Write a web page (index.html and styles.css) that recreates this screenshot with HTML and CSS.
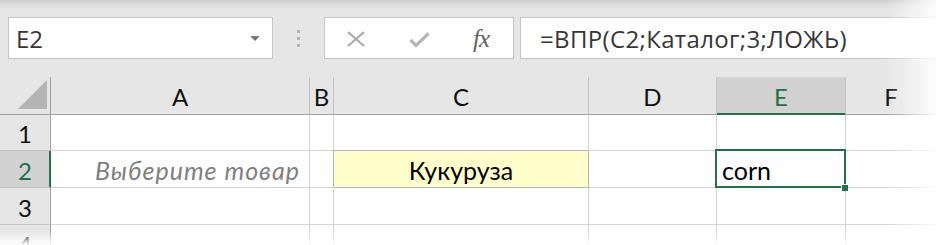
FILE: index.html
```html
<!DOCTYPE html>
<html lang="ru">
<head>
<meta charset="utf-8">
<title>Excel ВПР</title>
<link rel="stylesheet" href="styles.css">
</head>
<body>
<div class="app">
  <div class="toolbar">
    <div class="namebox">
      <span class="nb-text">E2</span>
      <svg class="nb-arrow" width="8" height="5" viewBox="0 0 8 5"><path d="M0 0H8V1L4 5L0 1Z" fill="#777"/></svg>
    </div>
    <div class="grip"><i></i><i></i><i></i></div>
    <div class="fxbox">
      <svg class="ic-x" width="18" height="16" viewBox="0 0 18 16"><path d="M1 1L17 15M17 1L1 15" stroke="#a8a8a8" stroke-width="2" fill="none"/></svg>
      <svg class="ic-ok" width="21" height="16" viewBox="0 0 21 16"><path d="M1.5 8L7 13.5L19.5 1.5" stroke="#b5b5b5" stroke-width="3.2" fill="none"/></svg>
      <span class="ic-fx">fx</span>
    </div>
    <div class="formula">=ВПР(C2;Каталог;3;ЛОЖЬ)</div>
  </div>

  <div class="sheet">
    <div class="corner"><svg width="30" height="30" viewBox="0 0 30 30"><path d="M29 0V29H0Z" fill="#b4b4b4"/></svg></div>
    <div class="ch">A</div>
    <div class="ch">B</div>
    <div class="ch">C</div>
    <div class="ch">D</div>
    <div class="ch sel">E</div>
    <div class="ch last">F</div>

    <div class="rh">1</div>
    <div class="c"></div><div class="c"></div><div class="c"></div><div class="c"></div><div class="c"></div><div class="c last"></div>

    <div class="rh sel">2</div>
    <div class="c hint">Выберите товар</div>
    <div class="c"></div>
    <div class="c input">Кукуруза</div>
    <div class="c"></div>
    <div class="c active">corn<span class="handle"></span></div>
    <div class="c last"></div>

    <div class="rh">3</div>
    <div class="c"></div><div class="c"></div><div class="c"></div><div class="c"></div><div class="c"></div><div class="c last"></div>

    <div class="rh">4</div>
    <div class="c"></div><div class="c"></div><div class="c"></div><div class="c"></div><div class="c"></div><div class="c last"></div>
  </div>

  <div class="fade-right"></div>
  <div class="fade-bottom"></div>
</div>
</body>
</html>
```
FILE: styles.css
```css
* { box-sizing: border-box; }
html, body { margin: 0; padding: 0; }
body { width: 936px; height: 245px; overflow: hidden; background: #fff; }

.app {
  position: relative;
  width: 936px;
  height: 245px;
  overflow: hidden;
  background: #e6e6e6;
}

/* ---------- formula bar ---------- */
.toolbar {
  height: 77px;
  padding: 17px 0 0 8px;
  display: flex;
  align-items: flex-start;
  background: linear-gradient(#cfcfcf 0px, #dedede 5px, #e6e6e6 10px, #e6e6e6 100%);
  font-family: "Open Sans", "Noto Sans", sans-serif;
  color: #363636;
}
.namebox {
  width: 265px;
  height: 42px;
  background: #fff;
  border: 1px solid #c6c6c6;
  display: flex;
  align-items: center;
  padding: 0 0 0 7px;
}
.nb-text { font-size: 24px; flex: 1; padding-top: 1px; }
.nb-arrow { margin-right: 13px; }

.grip {
  margin-left: 24px;
  padding-top: 13px;
  display: flex;
  flex-direction: column;
  gap: 4px;
}
.grip i { display: block; width: 3px; height: 3px; background: #b4b4b4; }

.fxbox {
  margin-left: 24px;
  width: 190px;
  height: 42px;
  background: #fff;
  border: 1px solid #c6c6c6;
  display: flex;
  align-items: center;
  padding-left: 22px;
}
.ic-x { margin-top: 1px; }
.ic-ok { margin-left: 44px; margin-top: 3px; }
.ic-fx {
  margin-left: 43px;
  font-family: "Liberation Serif", "DejaVu Serif", serif;
  font-style: italic;
  font-size: 25px;
  color: #5f5f5f;
  letter-spacing: -1px;
  padding-top: 1px;
}

.formula {
  margin-left: 6px;
  flex: 1;
  margin-right: -20px;
  height: 42px;
  background: #fff;
  border: 1px solid #c6c6c6;
  padding: 1px 0 0 19px;
  font-size: 24px;
  letter-spacing: 0.35px;
  line-height: 40px;
  white-space: nowrap;
}

/* ---------- sheet ---------- */
.sheet {
  display: grid;
  grid-template-columns: 51px 259px 24px 255px 128px 129px 1fr;
  grid-template-rows: 38px 36px 37px 37px 37px;
  font-family: "Lato", "Open Sans", sans-serif;
  background: #fff;
}
.corner {
  background: #e6e6e6;
  border-right: 1px solid #a0a0a0;
  border-bottom: 1px solid #a0a0a0;
  padding: 3px 0 0 18px;
}
.corner svg { display: block; }

.ch {
  background: #e6e6e6;
  border-right: 1px solid #c3c3c3;
  border-bottom: 1px solid #a0a0a0;
  display: flex;
  align-items: center;
  justify-content: center;
  font-size: 24px;
  color: #111;
  padding-top: 2px;
}
.ch.sel {
  background: #d2d2d2;
  color: #217346;
  border-bottom: 1px solid #217346;
  box-shadow: inset 0 -1px 0 #217346;
}
.ch.last { border-right: none; }

.rh {
  background: #e6e6e6;
  border-right: 1px solid #a0a0a0;
  border-bottom: 1px solid #c3c3c3;
  display: flex;
  align-items: center;
  justify-content: center;
  font-size: 24px;
  color: #111;
  padding-top: 2px;
}
.rh.sel {
  background: #d2d2d2;
  color: #217346;
  border-right: 1px solid #217346;
  box-shadow: inset -1px 0 0 #217346;
}

.c {
  position: relative;
  border-right: 1px solid #d4d4d4;
  border-bottom: 1px solid #d4d4d4;
  display: flex;
  align-items: flex-end;
  font-size: 25px;
  color: #000;
  padding: 0 5px 2px 5px;
  white-space: nowrap;
}
.c.last { border-right: none; }

.hint {
  justify-content: flex-end;
  font-style: italic;
  color: #7f7f7f;
  letter-spacing: 1px;
  padding-right: 9px;
}
.input {
  justify-content: center;
  background: #ffffcc;
  border-right-color: #b4b4b4;
  border-bottom-color: #b4b4b4;
  box-shadow: -1px -1px 0 #b4b4b4;
}
.active::after {
  content: "";
  position: absolute;
  left: -2px;
  top: -2px;
  right: -1px;
  bottom: -1px;
  border: 2px solid #217346;
  pointer-events: none;
}
.handle {
  position: absolute;
  right: -3px;
  bottom: -4px;
  width: 7px;
  height: 7px;
  background: #217346;
  border-left: 1px solid #fff;
  border-top: 1px solid #fff;
  z-index: 2;
}

/* ---------- screenshot edge fades ---------- */
.fade-right {
  position: absolute;
  top: 0;
  right: 0;
  width: 50px;
  height: 100%;
  background: linear-gradient(to right, rgba(255,255,255,0), rgba(255,255,255,0.9));
  pointer-events: none;
}
.fade-bottom {
  position: absolute;
  left: 0;
  bottom: 0;
  width: 100%;
  height: 14px;
  background: linear-gradient(rgba(255,255,255,0), rgba(255,255,255,0.95));
  pointer-events: none;
}
```
